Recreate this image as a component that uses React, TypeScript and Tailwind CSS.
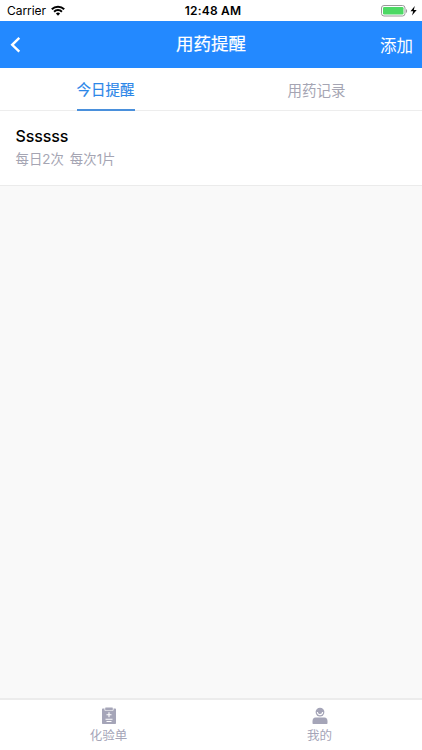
import type { ReactNode } from "react";

const TABS = [
  { key: "today", label: "今日提醒" },
  { key: "history", label: "用药记录" },
] as const;

interface Reminder {
  id: number;
  name: string;
  timesPerDay: number;
  dose: string;
}

const REMINDERS: Reminder[] = [{ id: 1, name: "Ssssss", timesPerDay: 2, dose: "1片" }];

export default function App() {
  return (
    <div className="flex h-[750px] w-full flex-col overflow-hidden bg-[#f9f9f9] font-[Inter,'Noto_Sans_CJK_SC',sans-serif]">
      <StatusBar />
      <NavBar />
      <TabBar active="today" />
      <main className="flex-1">
        {REMINDERS.map((item) => (
          <ReminderRow key={item.id} item={item} />
        ))}
      </main>
      <BottomBar />
    </div>
  );
}

function StatusBar() {
  return (
    <div className="grid h-[21px] shrink-0 grid-cols-3 items-center bg-white pr-[4px] pl-[7px] text-black">
      <div className="flex items-center gap-[5px] text-[12px]">
        <span className="leading-5 tracking-[-0.05px]">Carrier</span>
        <WifiIcon />
      </div>
      <div className="pl-px text-center text-[12px] leading-5 font-semibold tracking-[0.2px] whitespace-nowrap">
        12:48 AM
      </div>
      <div className="flex items-center justify-end">
        <BatteryIcon />
      </div>
    </div>
  );
}

function NavBar() {
  return (
    <header className="grid h-[47px] shrink-0 grid-cols-3 items-center bg-[#2389ff] px-[9px] text-white">
      <button type="button" aria-label="返回" className="justify-self-start">
        <svg width="12" height="18" viewBox="0 0 12 18" fill="none">
          <path d="M10.3 1.8 3.2 8.8l7.1 6.9" stroke="currentColor" strokeWidth="2.4" />
        </svg>
      </button>
      <h1 className="-mt-[2px] text-center text-[17.5px] leading-6 font-normal [-webkit-text-stroke:0.2px]">
        用药提醒
      </h1>
      <button type="button" className="justify-self-end pt-[2px] text-[16.5px] leading-6">
        添加
      </button>
    </header>
  );
}

function TabBar({ active }: { active: (typeof TABS)[number]["key"] }) {
  return (
    <div className="flex h-[43px] shrink-0 border-b border-[#ededed] bg-white">
      {TABS.map((tab) => (
        <div key={tab.key} className="flex flex-1 justify-center">
          <button
            type="button"
            className={[
              "-mb-px flex h-[43px] items-center border-b-2 text-[14.5px] leading-5",
              tab.key === active
                ? "border-[#4a90dc] pt-[2px] text-[#2b86e8] [-webkit-text-stroke:0.15px]"
                : "border-transparent pt-[4px] text-[#a5a5b3]",
            ].join(" ")}
          >
            {tab.label}
          </button>
        </div>
      ))}
    </div>
  );
}

function ReminderRow({ item }: { item: Reminder }) {
  return (
    <div className="h-[75px] border-b border-[#ebebeb] bg-white px-[15.5px] pt-[13px]">
      <div className="text-[16px] leading-6 font-medium tracking-[-0.1px] text-black">{item.name}</div>
      <div className="flex gap-[6px] text-[13.4px] leading-[22px] text-[#a5a5b3]">
        <span>每日{item.timesPerDay}次</span>
        <span>每次{item.dose}</span>
      </div>
    </div>
  );
}

function BottomBar() {
  return (
    <nav className="flex h-[52px] shrink-0 border-t-2 border-[#ececec] bg-white text-[#a5a5b8]">
      <BottomItem label="化验单" icon={<ReportIcon />} />
      <BottomItem label="我的" icon={<UserIcon />} />
    </nav>
  );
}

function BottomItem({ label, icon }: { label: string; icon: ReactNode }) {
  return (
    <button type="button" className="flex flex-1 flex-col items-center pt-[7px] pl-[6px]">
      {icon}
      <span className="pt-px text-[12.5px] leading-5">{label}</span>
    </button>
  );
}

function WifiIcon() {
  return (
    <svg width="14" height="11" viewBox="0 0 14 11" fill="none" stroke="#000" strokeWidth="2">
      <path d="M.8 4.2a8.8 8.8 0 0 1 12.4 0" />
      <path d="M3.1 6.7a5.5 5.5 0 0 1 7.8 0" />
      <path d="M7 10.7 4.9 8.5a3 3 0 0 1 4.2 0z" fill="#000" stroke="none" />
    </svg>
  );
}

function BatteryIcon() {
  return (
    <svg width="37" height="12" viewBox="0 0 37 12">
      <rect x=".5" y=".5" width="23.5" height="10.5" rx="2.5" fill="#fff" stroke="#999" />
      <rect x="2" y="2" width="20.5" height="7.5" rx="1.2" fill="#4cd964" />
      <path d="M25 4v4c1.5-.5 1.5-3.5 0-4z" fill="#999" />
      <path d="M33.8 1 29.5 6.3h2.7L31 10.5l4.7-5.6h-2.9z" fill="#000" />
    </svg>
  );
}

function ReportIcon() {
  return (
    <svg width="16" height="18" viewBox="0 0 16 18" fill="none">
      <path
        d="M2 1.5h1.5v1.6c0 .4.3.7.7.7h7.6c.4 0 .7-.3.7-.7V1.5H14c.6 0 1 .4 1 1V16c0 .6-.4 1-1 1H2c-.6 0-1-.4-1-1V2.5c0-.6.4-1 1-1z"
        fill="currentColor"
      />
      <rect x="4.2" y=".5" width="7.6" height="2.7" rx=".5" fill="currentColor" />
      <path d="M8 5.2v5M5.5 7.7h5M4.5 12.2h7M5.5 14.5h5" stroke="#fff" strokeWidth="1.1" />
    </svg>
  );
}

function UserIcon() {
  return (
    <svg width="16" height="18" viewBox="0 0 16 18" fill="none">
      <circle cx="8" cy="5.1" r="4.4" fill="currentColor" />
      <path d="M5.4 5a2.6 2.6 0 0 0 5.2 0" stroke="#fff" strokeWidth="1.1" />
      <path
        d="M3.5 10.5h9c1.8 0 3 1.7 3 3.5v2c0 .6-.4 1-1 1h-13c-.6 0-1-.4-1-1v-2c0-1.8 1.2-3.5 3-3.5z"
        fill="currentColor"
      />
    </svg>
  );
}
